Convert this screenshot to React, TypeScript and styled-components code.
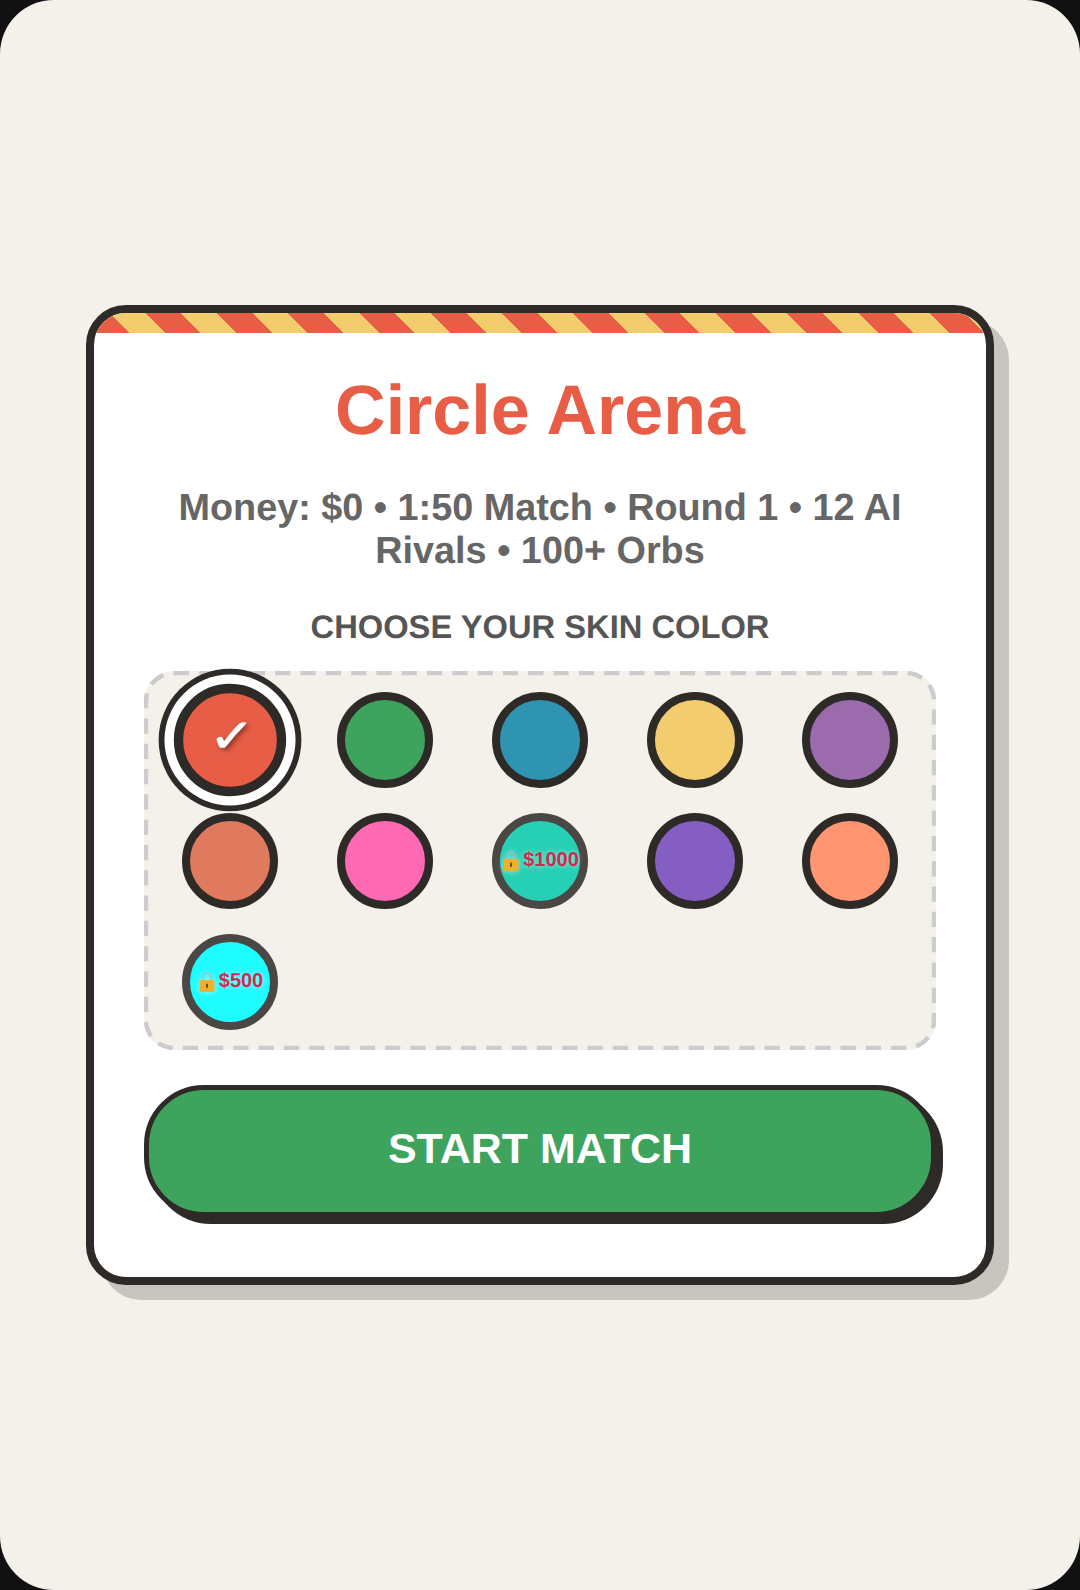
import styled, { createGlobalStyle } from 'styled-components'

type Skin = {
    color: string
    selected?: boolean
    price?: number
}

const skins: Skin[] = [
    { color: '#e85d45', selected: true },
    { color: '#3da35d' },
    { color: '#2e94b2' },
    { color: '#f2cc6d' },
    { color: '#9b6bad' },
    { color: '#e07a5f' },
    { color: '#ff69b4' },
    { color: '#25d0b4', price: 1000 },
    { color: '#845ec2' },
    { color: '#ff9671' },
    { color: '#1ffcff', price: 500 },
]

const LockIcon = () => (
    <LockSvg viewBox="0 0 16 21" aria-hidden="true">
        <path d="M4 10V6a4 4 0 0 1 8 0v4" fill="none" stroke="#a9b8c4" strokeWidth="1.5" />
        <rect x="0.5" y="9" width="15" height="12" rx="1.5" fill="#eeb02f" />
        <rect x="7" y="12.5" width="2" height="4.5" rx="1" fill="#6b4a12" />
    </LockSvg>
)

// the browser's own dashed border is too short in the dash, so it is drawn
const DashedOutline = () => (
    <OutlineSvg viewBox="0 0 792 379" aria-hidden="true">
        <rect
            x="2"
            y="2"
            width="788"
            height="375"
            rx="28"
            fill="none"
            stroke="#cccccc"
            strokeWidth="4.5"
            strokeDasharray="15.2 10.1"
        />
    </OutlineSvg>
)

export default function App() {
    return (
        <>
            <GlobalStyle />
            <Screen>
                <Card>
                    <Stripes />
                    <Title>Circle Arena</Title>
                    <Stats>Money: $0 • 1:50 Match • Round 1 • 12 AI Rivals • 100+ Orbs</Stats>
                    <SectionLabel>CHOOSE YOUR SKIN COLOR</SectionLabel>
                    <SkinGrid>
                        <DashedOutline />
                        {skins.map((skin) => (
                            <SkinOption
                                key={skin.color}
                                $color={skin.color}
                                $selected={skin.selected}
                                $locked={skin.price !== undefined}
                            >
                                {skin.selected && <Check>✓</Check>}
                                {skin.price !== undefined && (
                                    <Price>
                                        <LockIcon />${skin.price}
                                    </Price>
                                )}
                            </SkinOption>
                        ))}
                    </SkinGrid>
                    <StartButton>START MATCH</StartButton>
                </Card>
            </Screen>
        </>
    )
}

const GlobalStyle = createGlobalStyle`
    html, body {
        margin: 0;
        padding: 0;
        background: #111111;
    }

    * {
        box-sizing: border-box;
    }
`

const Screen = styled.div`
    width: 1080px;
    height: 1590px;
    display: flex;
    align-items: center;
    justify-content: center;
    background: #f4f1ea;
    border-radius: 54px;
    font-family: 'Liberation Sans', Arial, sans-serif;
    text-rendering: geometricPrecision;
`

const Card = styled.div`
    width: 908px;
    height: 980px;
    display: flex;
    flex-direction: column;
    align-items: center;
    padding: 0 50px;
    background: #ffffff;
    border: 8px solid #2d2a28;
    border-radius: 40px;
    box-shadow: 15px 15px 0 rgba(45, 42, 40, 0.22);
    overflow: clip;
    overflow-clip-margin: 0;
`

const Stripes = styled.div`
    width: 892px;
    height: 20px;
    flex: none;
    margin: 0 -50px;
    background: repeating-linear-gradient(
        45deg,
        #e85d45,
        #e85d45 25.2px,
        #f2cc6d 25.2px,
        #f2cc6d 50.4px
    );
`

const Title = styled.h1`
    margin: 36px 0 0;
    font-size: 70px;
    line-height: 83px;
    font-weight: 700;
    color: #e85d45;
`

const Stats = styled.p`
    margin: 35px 0 0;
    font-size: 37.8px;
    line-height: 43px;
    font-weight: 700;
    text-align: center;
    color: #666666;
`

const SectionLabel = styled.h2`
    margin: 35px 0 0;
    font-size: 32.7px;
    line-height: 37px;
    font-weight: 700;
    color: #555555;
`

const SkinGrid = styled.div`
    position: relative;
    width: 792px;
    display: grid;
    grid-template-columns: repeat(5, 1fr);
    justify-items: center;
    gap: 25px;
    margin-top: 26px;
    padding: 17px 17px 16px;
    background: #f4f1ea;
    border: 4px solid transparent;
    border-radius: 30px;
`

const OutlineSvg = styled.svg`
    position: absolute;
    top: -4px;
    left: -4px;
    width: 792px;
    height: 379px;
`

const SkinOption = styled.div<{ $color: string; $selected?: boolean; $locked?: boolean }>`
    width: 96px;
    height: 96px;
    display: flex;
    align-items: center;
    justify-content: center;
    background: ${({ $color }) => $color};
    border: 8px solid ${({ $locked }) => ($locked ? '#4a4744' : '#2d2a28')};
    border-radius: 50%;
    ${({ $selected }) =>
        $selected && 'transform: scale(1.17); box-shadow: 0 0 0 8px #ffffff, 0 0 0 13px #2d2a28;'}
`

const Check = styled.span`
    display: inline-block;
    font-size: 40px;
    font-weight: 400;
    line-height: 1;
    color: #ffffff;
    -webkit-text-stroke: 0.5px #ffffff;
    text-shadow: 2px 2px 4px rgba(0, 0, 0, 0.5);
    transform: translate(2px, -3px) scaleX(1.2);
`

const Price = styled.span`
    display: flex;
    align-items: center;
    gap: 4px;
    margin-left: 2px;
    padding-bottom: 2px;
    font-size: 20px;
    font-weight: 700;
    white-space: nowrap;
    color: #cc2c50;
    text-shadow: 0 0 5px rgba(255, 255, 255, 0.6);
`

const LockSvg = styled.svg`
    width: 16px;
    height: 21px;
    flex: none;
    filter: drop-shadow(0 0 3px rgba(255, 255, 255, 0.6));
`

const StartButton = styled.button`
    width: 792px;
    height: 132px;
    flex: none;
    margin-top: 35px;
    padding: 0 0 5px;
    font-family: inherit;
    font-size: 43px;
    font-weight: 700;
    color: #ffffff;
    background: #3da35d;
    border: 5px solid #2d2a28;
    border-radius: 60px;
    box-shadow: 7px 7px 0 #2d2a28;
`
